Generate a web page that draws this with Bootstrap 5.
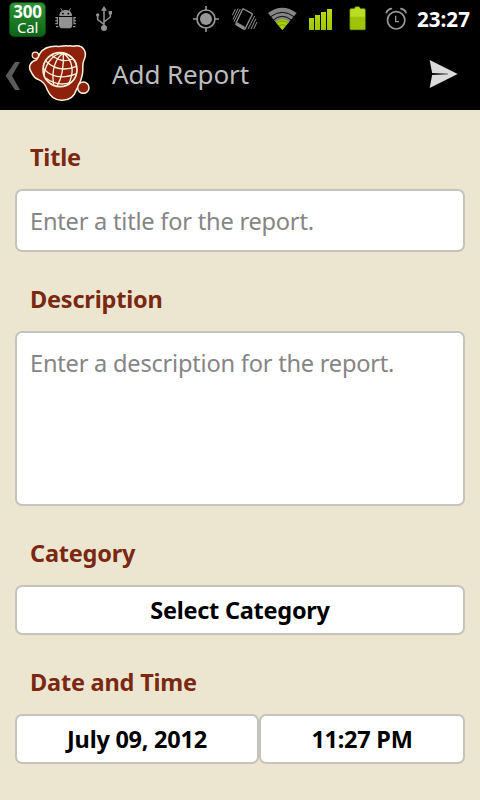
<!DOCTYPE html>
<html lang="en">
<head>
<meta charset="utf-8">
<meta name="viewport" content="width=device-width, initial-scale=1">
<title>Add Report</title>
<link href="https://cdn.jsdelivr.net/npm/bootstrap@5.3.0/dist/css/bootstrap.min.css" rel="stylesheet">
<style>
  body { font-family: "Noto Sans", "Open Sans", sans-serif; background: #ece6d0; font-size: 24px; line-height: 32px; width: 480px; height: 800px; overflow: hidden; }
  svg { display: block; flex: none; }
  .statusbar { height: 38px; padding-left: 9px; padding-right: 9px; }
  .statusbar svg { height: 38px; }
  .cal-badge { width: 37px; height: 35px; margin-top: 2px; border-radius: 5px; background: linear-gradient(#2c9433, #0e6316); border: 1px solid #0b4b12; }
  .cal-badge b, .cal-badge span { display: block; height: 16px; line-height: 17px; font-size: 17px; letter-spacing: -.3px; }
  .cal-badge span { font-size: 15px; line-height: 16px; letter-spacing: -.2px; }
  .clock { font-size: 20.6px; line-height: 38px; width: 54px; white-space: nowrap; }
  .actionbar { height: 72px; }
  .screen-title { color: #bdbdbd; font-size: 26px; font-weight: 400; letter-spacing: -.1px; padding-left: 22px; padding-top: 1px; }
  .field-label { display: block; color: #7a2812; font-size: 23.5px; font-weight: 700; padding-left: 15px; white-space: nowrap; height: 32px; margin: 31px 0 16px; letter-spacing: -.2px; }
  .field-box, .field-box:focus { display: block; background: #fff; border: 2px solid #c6c3bd; border-radius: 7px; font-size: 23.6px; line-height: 32px; padding: 13px; color: #000; box-shadow: none; resize: none; letter-spacing: -.22px; }
  .field-box::placeholder { color: #858585; opacity: 1; }
  .title-box { height: 63px; margin-bottom: 32px; }
  .desc-box.desc-box { height: 175px; padding-top: 14px; margin-bottom: 32px; }
  .pick-btn { height: 50px; padding: 0; font-size: 23.5px; font-weight: 700; text-align: center; white-space: nowrap; letter-spacing: -.25px; }
  .field-box.pick-btn { font-size: 23.5px; padding: 0; letter-spacing: -.25px; }
  .category-btn { margin-bottom: 32px; }
  .report-form { padding: 0 15px; display: flow-root; }
  .date-btn { width: 244px; }
  .time-btn { width: 206px; }
</style>
</head>
<body>
<header class="bg-black">
  <div class="statusbar d-flex align-items-start text-white">
    <div class="cal-badge text-center"><b>300</b><span>Cal</span></div>
    <svg width="40" height="38" viewBox="138 0 120 114" fill="#929292" aria-hidden="true">
      <path d="M178 48c0-12 8-18 19-18s19 6 19 18z"/><path d="M182 25l6 9M212 25l-6 9" stroke="#929292" stroke-width="3"/>
      <circle cx="189" cy="41" r="2.5" fill="#000"/><circle cx="205" cy="41" r="2.5" fill="#000"/>
      <path d="M177 51h40v23q0 11-11 11h-18q-11 0-11-11z"/>
      <path d="M166 53h8M166 62h8M166 71h8M168 80h7M220 53h8M220 62h8M220 71h8M219 80h7M172 53v20M222 53v20" fill="none" stroke="#929292" stroke-width="3.500"/>
    </svg>
    <svg width="34" height="38" viewBox="258 0 102 114" fill="#929292" aria-hidden="true">
      <path d="M312 24v60M312 73l-19-14V47M312 66l19-15V40" fill="none" stroke="#929292" stroke-width="4.500"/>
      <path d="M303 32l9-14 9 14z"/><circle cx="312" cy="84" r="9"/><circle cx="293" cy="45" r="5"/><path d="M326 33h10v10h-10z"/>
    </svg>
    <svg class="ms-auto" width="40" height="38" viewBox="9 0 120 114" aria-hidden="true">
      <circle cx="63" cy="57" r="27" fill="none" stroke="#969696" stroke-width="5"/><circle cx="63" cy="57" r="18" fill="#969696"/>
      <path d="M63 18v14M63 82v14M24 57h14M88 57h14" stroke="#969696" stroke-width="5"/>
    </svg>
    <svg width="38" height="38" viewBox="129 0 114 114" fill="none" stroke="#929292" aria-hidden="true">
      <path d="M176 27l24 13q3 2 1 5l-20 40q-2 4-6 2l-20-12q-4-2-2-6l19-40q1-3 4-2z" stroke-width="4"/>
      <path d="M157 68l22 13-4 6-22-13z" fill="#929292" stroke-width="2"/>
      <path d="M151 27l-9 19M159 26l-15 32M166 27l-19 38M209 48l-20 39M213 56l-15 31M216 66l-10 21" stroke-width="3"/>
    </svg>
    <svg width="38" height="38" viewBox="243 0 114 114" aria-hidden="true">
      <path d="M249 39Q292 8 335 39L292 90z" fill="#858585"/>
      <path d="M272 66Q292 49 312 66L292 90z" fill="#a8d000"/>
      <path d="M257 50Q292 24 327 50M265 60Q292 38 319 60" fill="none" stroke="#080808" stroke-width="3"/>
      <path d="M274 70Q292 56 310 70M281 78Q292 69 303 78" fill="none" stroke="#5e8100" stroke-width="2"/>
    </svg>
    <svg width="40" height="38" viewBox="357 0 120 114" aria-hidden="true">
      <defs><linearGradient id="lime" x2="0" y2="1"><stop stop-color="#bbdc13"/><stop offset="1" stop-color="#9fc502"/></linearGradient></defs>
      <g fill="url(#lime)"><path d="M372 54h15v36h-15zM390 45h15v45h-15zM408 36h15v54h-15zM426 27h15v63h-15z"/></g>
    </svg>
    <svg width="38" height="38" viewBox="28 0 114 114" aria-hidden="true">
      <path d="M49 25h10q1-6 9-6t9 6h10q6 0 6 6v55q0 4-4 4H49q-4 0-4-4V31q0-6 4-6z" fill="#9dc408" stroke="#334600" stroke-width="2"/>
      <path d="M47 50V32q0-5 5-5h8l3-5h10l3 5h9q6 0 6 5v18z" fill="#b9dc25"/>
    </svg>
    <svg width="35" height="38" viewBox="142 0 105 114" fill="none" stroke="#989898" aria-hidden="true">
      <circle cx="184.500" cy="61" r="26" stroke-width="5"/><path d="M183 47v18h10" stroke-width="4"/>
      <path d="M155 38q4-10 15-12M214 38q-4-10-15-12" stroke-width="5" stroke-linecap="round"/>
    </svg>
    <b class="clock">23:27</b>
  </div>
  <div class="actionbar d-flex align-items-center">
    <svg width="28" height="72" viewBox="0 0 84 216" aria-hidden="true"><path d="M45 72h15L36 113l24 43H45L17 113z" fill="#5b5b5b"/></svg>
    <svg width="62" height="72" viewBox="84 0 186 216" aria-hidden="true">
      <g fill="#8e210b" stroke="#fff3df" stroke-width="4.500">
        <path d="M120 46C130 31 148 24 170 25C189 26 192 22 205 24C210 22 219 26 223 24C251 20 263 43 252 66C245 80 251 91 247 109C244 129 237 139 230 154C222 178 207 188 185 187C161 187 150 174 142 156C137 141 132 131 116 125C100 119 99 111 93 101C82 84 94 69 110 65Q117 55 120 46z"/>
        <circle cx="106" cy="52" r="9.500" stroke-width="3.500"/>
        <circle cx="250" cy="149" r="17"/>
      </g>
      <g fill="none" stroke="#fff0da" stroke-width="4">
        <circle cx="180" cy="95" r="51" stroke-width="5"/>
        <path d="M190 46C168 58 153 95 161 140M190 46C191 70 190 113 171 145M190 46C220 65 223 105 206 137M190 46C165 44 137 71 132 112M190 46C210 49 222 57 229 79"/>
        <path d="M155 52Q186 77 218 63M137 69Q176 107 229 85M130 91Q166 132 230 107M138 121Q171 146 211 134"/>
      </g>
    </svg>
    <h1 class="screen-title mb-0 me-auto">Add Report</h1>
    <svg width="62" height="72" viewBox="0 0 186 216" role="img" aria-label="Send">
      <defs><linearGradient id="slot"><stop stop-color="#000"/><stop offset="1" stop-color="#aaa"/></linearGradient></defs>
      <path d="M35 66l84 42-84 42 8-42z" fill="#dcdcdc"/><path d="M40 105h50v6H40z" fill="url(#slot)"/>
    </svg>
  </div>
</header>
<main>
  <form class="report-form">
    <label class="field-label" for="title">Title</label>
    <input class="form-control field-box title-box mb-0" id="title" placeholder="Enter a title for the report.">
    <label class="field-label" for="desc">Description</label>
    <textarea class="form-control field-box desc-box mb-0" id="desc" placeholder="Enter a description for the report."></textarea>
    <span class="field-label">Category</span>
    <button type="button" class="field-box pick-btn w-100 mb-0">Select Category</button>
    <span class="field-label">Date and Time</span>
    <div class="d-flex">
      <button type="button" class="field-box pick-btn date-btn">July 09, 2012</button>
      <button type="button" class="field-box pick-btn time-btn">11:27 PM</button>
    </div>
  </form>
</main>
<script src="https://cdn.jsdelivr.net/npm/bootstrap@5.3.0/dist/js/bootstrap.bundle.min.js"></script>
</body>
</html>
